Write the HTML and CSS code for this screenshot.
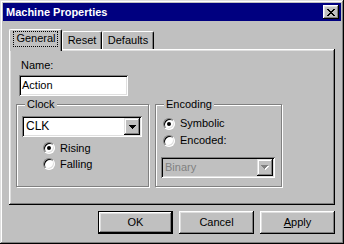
FILE: index.html
```html
<!DOCTYPE html>
<html lang="en">
<head>
<meta charset="UTF-8" />
<meta name="viewport" content="width=device-width, initial-scale=1" />
<title>Machine Properties</title>
<link rel="stylesheet" href="styles.css">
</head>
<body>

<div class="window">
  <div class="titlebar">
    <span class="title">Machine Properties</span>
    <button class="close" aria-label="Close">
      <svg width="8" height="7" viewBox="0 0 8 7" shape-rendering="crispEdges">
        <path fill="#000" d="M0 0h2v1h-2zM6 0h2v1h-2zM1 1h2v1h-2zM5 1h2v1h-2zM2 2h4v1h-4zM3 3h2v1h-2zM2 4h4v1h-4zM1 5h2v1h-2zM5 5h2v1h-2zM0 6h2v1h-2zM6 6h2v1h-2z"/>
      </svg>
    </button>
  </div>

  <div class="tabs">
    <div class="tab tab-general active"><span class="focus">General</span></div>
    <div class="tab tab-reset">Reset</div>
    <div class="tab tab-defaults">Defaults</div>
  </div>

  <div class="panel">
    <div class="field-label">Name:</div>
    <div class="textbox">Action</div>

    <div class="groups">
      <div class="group group-clock">
        <div class="group-title">Clock</div>
        <div class="combo combo-clock">
          <span class="combo-value">CLK</span>
          <span class="combo-btn">
            <svg width="7" height="4" viewBox="0 0 7 4" shape-rendering="crispEdges">
              <path fill="#000" d="M0 0h7v1h-7zM1 1h5v1h-5zM2 2h3v1h-3zM3 3h1v1h-1z"/>
            </svg>
          </span>
        </div>
        <div class="radios radios-clock">
          <div class="radio-row"><span class="radio checked"></span>Rising</div>
          <div class="radio-row"><span class="radio"></span>Falling</div>
        </div>
      </div>

      <div class="group group-encoding">
        <div class="group-title">Encoding</div>
        <div class="radios radios-encoding">
          <div class="radio-row"><span class="radio checked"></span>Symbolic</div>
          <div class="radio-row"><span class="radio"></span>Encoded:</div>
        </div>
        <div class="combo combo-binary disabled">
          <span class="combo-value">Binary</span>
          <span class="combo-btn">
            <svg width="8" height="5" viewBox="0 0 8 5" shape-rendering="crispEdges">
              <path fill="#fff" d="M1 1h7v1h-7zM2 2h5v1h-5zM3 3h3v1h-3zM4 4h1v1h-1z"/>
              <path fill="#808080" d="M0 0h7v1h-7zM1 1h5v1h-5zM2 2h3v1h-3zM3 3h1v1h-1z"/>
            </svg>
          </span>
        </div>
      </div>
    </div>
  </div>

  <div class="buttons">
    <button class="btn default">OK</button>
    <button class="btn">Cancel</button>
    <button class="btn"><u>A</u>pply</button>
  </div>
</div>

</body>
</html>
```

FILE: styles.css
```css
body {
  margin: 0;
  font-family: "Liberation Sans", Arial, sans-serif;
  font-size: 11px;
  line-height: 13px;
  color: #000;
  background: #c0c0c0;
}
.window {
  width: 344px;
  height: 244px;
  box-sizing: border-box;
  padding: 3px;
  background: #c0c0c0;
  box-shadow: inset -1px -1px #000, inset 1px 1px #dfdfdf,
              inset -2px -2px #808080, inset 2px 2px #fff;
}
.titlebar {
  height: 18px;
  background: #000080;
  display: flex;
  align-items: center;
  justify-content: space-between;
  padding: 0 2px 0 3px;
}
.title {
  color: #fff;
  font-weight: bold;
}
.close {
  width: 16px;
  height: 14px;
  padding: 0;
  border: none;
  background: #c0c0c0;
  display: flex;
  align-items: center;
  justify-content: center;
  box-shadow: inset -1px -1px #000, inset 1px 1px #fff,
              inset -2px -2px #808080, inset 2px 2px #dfdfdf;
}
.close svg {
  display: block;
  margin: 0 1px 0 0;
}

.tabs {
  display: flex;
  align-items: flex-end;
  height: 20px;
  margin: 8px 0 0 6px;
}
.tab {
  box-sizing: border-box;
  height: 18px;
  padding-top: 2px;
  text-align: center;
  background: #c0c0c0;
  border-top: 1px solid #fff;
  border-left: 1px solid #fff;
  border-right: 1px solid #000;
  border-radius: 2px 2px 0 0;
  box-shadow: inset -1px 0 #808080;
}
.tab-general { width: 53px; }
.tab-reset { width: 40px; }
.tab-defaults { width: 52px; }
.tab.active {
  height: 22px;
  margin-bottom: -2px;
  padding-top: 2px;
  z-index: 1;
}
.focus {
  display: inline-block;
  padding: 0 1px 1px 2px;
  outline: 1px dotted #000;
  outline-offset: 0;
}

.panel {
  box-sizing: border-box;
  height: 156px;
  margin: 0 6px;
  padding: 10px 0 0 10px;
  box-shadow: inset -1px -1px #000, inset 1px 1px #fff,
              inset -2px -2px #808080, inset 2px 2px #dfdfdf;
}
.field-label {
  padding-left: 2px;
}
.textbox {
  box-sizing: border-box;
  width: 109px;
  height: 21px;
  margin-top: 3px;
  padding: 4px 0 0 3px;
  background: #fff;
  box-shadow: inset 1px 1px #808080, inset -1px -1px #fff,
              inset 2px 2px #000, inset -2px -2px #dfdfdf;
}

.groups {
  display: flex;
  gap: 6px;
  margin: 8px 0 0 -3px;
}
.group {
  box-sizing: border-box;
  height: 83px;
  padding: 0 5px;
  border: 1px solid #808080;
  box-shadow: inset 1px 1px #fff, 1px 1px #fff;
}
.group-clock { width: 133px; }
.group-encoding { width: 127px; }
.group-title {
  width: fit-content;
  margin: -7px 0 0 3px;
  padding: 0 2px;
  background: #c0c0c0;
}

.combo {
  box-sizing: border-box;
  height: 21px;
  display: flex;
  align-items: center;
  justify-content: space-between;
  padding: 2px 2px 2px 4px;
  background: #fff;
  box-shadow: inset 1px 1px #808080, inset -1px -1px #fff,
              inset 2px 2px #000, inset -2px -2px #dfdfdf;
}
.combo-clock {
  width: 120px;
  margin-top: 5px;
  font-size: 12px;
}
.combo-binary {
  width: 114px;
  margin-top: 8px;
}
.combo.disabled {
  background: #c0c0c0;
  color: #808080;
}
.combo-btn {
  width: 16px;
  height: 17px;
  display: flex;
  align-items: center;
  justify-content: center;
  background: #c0c0c0;
  box-shadow: inset -1px -1px #000, inset 1px 1px #dfdfdf,
              inset -2px -2px #808080, inset 2px 2px #fff;
}

.radios-clock {
  margin: 3px 0 0 21px;
}
.radios-encoding {
  margin: 4px 0 0 2px;
}
.radio-row {
  display: flex;
  align-items: center;
  height: 16px;
}
.radios-encoding .radio-row {
  height: 17px;
}
.radio {
  box-sizing: border-box;
  width: 12px;
  height: 12px;
  margin-right: 5px;
  border-radius: 50%;
  background: #fff;
  border: 1px solid;
  border-color: #808080 #fff #fff #808080;
  box-shadow: inset 1px 1px #000, inset -1px -1px #dfdfdf;
  display: flex;
  align-items: center;
  justify-content: center;
}
.radio.checked::after {
  content: "";
  width: 4px;
  height: 4px;
  border-radius: 50%;
  background: #000;
}

.buttons {
  display: flex;
  justify-content: flex-end;
  gap: 6px;
  margin: 6px 6px 0 0;
}
.btn {
  box-sizing: border-box;
  width: 75px;
  height: 23px;
  padding: 0;
  border: none;
  background: #c0c0c0;
  font: inherit;
  color: #000;
  box-shadow: inset -1px -1px #000, inset 1px 1px #fff,
              inset -2px -2px #808080, inset 2px 2px #dfdfdf;
}
.btn.default {
  border: 1px solid #000;
}
.btn u {
  text-decoration: underline;
}
```
